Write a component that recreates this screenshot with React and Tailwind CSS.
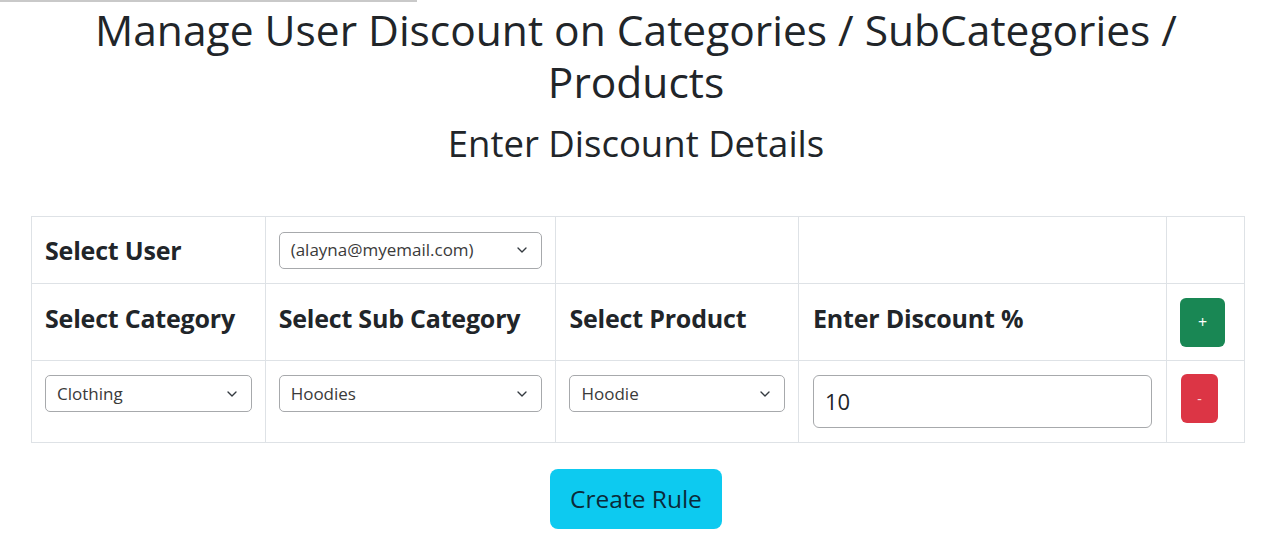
import { ChevronDown } from 'lucide-react';

const Select = ({ value, className = '' }) => (
  <div
    className={`flex items-center justify-between h-[37px] px-[11px] border border-[#a7a9ac] rounded-[5px] bg-white text-[17px] text-[#3a3a3a] ${className}`}
  >
    <span>{value}</span>
    <ChevronDown className="h-4 w-4 text-[#343a40]" strokeWidth={2} />
  </div>
);

const Heading = ({ children, className = '' }) => (
  <h5 className={`text-[25px] font-bold text-[#212529] leading-[30px] tracking-[-0.2px] ${className}`}>{children}</h5>
);

export default function App() {
  return (
    <div className="min-h-screen bg-white font-['Open_Sans',sans-serif] text-[#212529]">
      <div className="h-[2px] w-[417px] bg-[#c9c9c9]" />

      <div className="px-[31px] pt-[2px]">
        <h1 className="text-center text-[42.5px] leading-[52px] font-normal">
          Manage User Discount on Categories / SubCategories /<br />
          Products
        </h1>
        <h2 className="mt-[11px] text-center text-[36.5px] leading-[48px] font-normal">
          Enter Discount Details
        </h2>

        <table className="mt-[49px] w-[1214px] border-collapse border border-[#dee2e6]">
          <tbody>
            <tr className="h-[67px]">
              <td className="w-[234px] border border-[#dee2e6] px-[13px] align-middle">
                <Heading>Select User</Heading>
              </td>
              <td className="w-[291px] border border-[#dee2e6] px-[13px] align-middle">
                <Select value="(alayna@myemail.com)" />
              </td>
              <td className="w-[243px] border border-[#dee2e6]" />
              <td className="w-[368px] border border-[#dee2e6]" />
              <td className="w-[78px] border border-[#dee2e6]" />
            </tr>
            <tr className="h-[77px]">
              <td className="border border-[#dee2e6] px-[13px] align-middle">
                <Heading className="mb-[9px]">Select Category</Heading>
              </td>
              <td className="border border-[#dee2e6] px-[13px] align-middle">
                <Heading className="mb-[9px]">Select Sub Category</Heading>
              </td>
              <td className="border border-[#dee2e6] px-[13px] align-middle">
                <Heading className="mb-[9px]">Select Product</Heading>
              </td>
              <td className="border border-[#dee2e6] px-[14px] align-middle">
                <Heading className="mb-[9px]">Enter Discount %</Heading>
              </td>
              <td className="border border-[#dee2e6] px-[13px] align-middle">
                <button className="flex h-[49px] w-[45px] items-center justify-center rounded-[6px] bg-[#198754] text-[16px] text-white">
                  +
                </button>
              </td>
            </tr>
            <tr className="h-[82px]">
              <td className="border border-[#dee2e6] px-[13px] pt-[14px] align-top">
                <Select value="Clothing" />
              </td>
              <td className="border border-[#dee2e6] px-[13px] pt-[14px] align-top">
                <Select value="Hoodies" />
              </td>
              <td className="border border-[#dee2e6] px-[13px] pt-[14px] align-top">
                <Select value="Hoodie" />
              </td>
              <td className="border border-[#dee2e6] px-[14px] pt-[14px] align-top">
                <div className="flex h-[53px] w-[339px] items-center rounded-[6px] border border-[#a7a9ac] bg-white px-[11px] text-[22px] text-[#212529]">
                  10
                </div>
              </td>
              <td className="border border-[#dee2e6] px-[14px] pt-[13px] align-top">
                <button className="flex h-[49px] w-[37px] items-center justify-center rounded-[6px] bg-[#dc3545] text-[14px] text-white/80">
                  -
                </button>
              </td>
            </tr>
          </tbody>
        </table>

        <div className="mt-[26px] flex justify-center">
          <button className="h-[60px] w-[172px] rounded-[8px] bg-[#0dcaf0] text-[24.5px] text-[#0b2a3a]">
            Create Rule
          </button>
        </div>
      </div>
    </div>
  );
}
